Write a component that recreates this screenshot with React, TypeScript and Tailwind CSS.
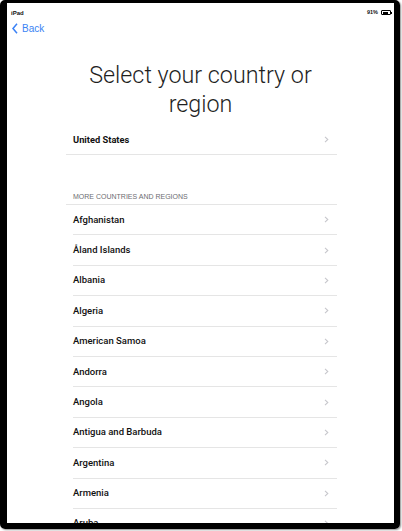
import React from "react";

const countries = [
  "Afghanistan",
  "Åland Islands",
  "Albania",
  "Algeria",
  "American Samoa",
  "Andorra",
  "Angola",
  "Antigua and Barbuda",
  "Argentina",
  "Armenia",
  "Aruba",
  "Australia",
];

function Chevron() {
  return (
    <svg width="5" height="7" viewBox="0 0 5 7" className="shrink-0">
      <path d="M1 0.8 L3.8 3.5 L1 6.2" fill="none" stroke="#c7c7cc" strokeWidth="1.1" />
    </svg>
  );
}

export default function App() {
  return (
    <div className="w-[402px] h-[531px] bg-white overflow-hidden">
      <div className="w-[400px] h-[529px] border-black border-l-[7px] border-t-[3px] border-r-[6px] border-b-[6px] rounded-[5px] shadow-[1px_1px_2px_rgba(0,0,0,0.45)] overflow-hidden">
        <div
          className="h-full bg-white rounded-[3px] overflow-hidden flex flex-col"
          style={{ fontFamily: "'Liberation Sans', Arial, sans-serif" }}
        >
          {/* status bar */}
          <div className="h-[19px] flex items-center justify-between pl-[4px] pr-[2px] shrink-0">
            <span className="text-[6px] font-bold text-[#111] leading-none">iPad</span>
            <div className="flex items-center gap-[3px]">
              <span className="text-[5.5px] font-bold text-[#111] leading-none">91%</span>
              <div className="flex items-center">
                <div className="w-[10px] h-[5px] border border-black rounded-[1px] p-[0.5px]">
                  <div className="w-[85%] h-full bg-black" />
                </div>
                <div className="w-[1px] h-[2px] bg-black" />
              </div>
            </div>
          </div>
          {/* back */}
          <div className="h-[13px] flex items-center pl-[5px] gap-[4px] shrink-0">
            <svg width="6" height="11" viewBox="0 0 6 11">
              <path d="M5 0.8 L1 5.5 L5 10.2" fill="none" stroke="#3b82f6" strokeWidth="1.5" />
            </svg>
            <span className="text-[10px] text-[#3a84f4] leading-none">Back</span>
          </div>
          {/* title */}
          <div
            className="mt-[26px] text-center text-[23.3px] leading-[29px] font-light text-[#1f1f1f] shrink-0"
            style={{ fontFamily: "Roboto, 'Liberation Sans', sans-serif" }}
          >
            Select your country or
            <br />
            region
          </div>
          {/* list */}
          <div
            className="w-[271px] ml-[59px] mt-[6px] shrink-0"
            style={{ fontFamily: "Roboto, 'Liberation Sans', sans-serif" }}
          >
            <div className="h-[30px] flex items-center justify-between pl-[7px] pr-[8px] border-b border-[#e5e5e5]">
              <span className="text-[9.3px] font-bold text-[#111]">United States</span>
              <Chevron />
            </div>
            <div className="pt-[37px] pb-[3px] pl-[7px] border-b border-[#e5e5e5]">
              <div
                className="text-[7px] leading-[9px] text-[#6d6d72]"
                style={{ fontFamily: "'Liberation Sans', Arial, sans-serif" }}
              >
                MORE COUNTRIES AND REGIONS
              </div>
            </div>
            {countries.map((c) => (
              <div key={c} className="pl-[7px]">
                <div className="h-[30.4px] flex items-center justify-between pr-[8px] border-b border-[#e5e5e5]">
                  <span className="text-[9.5px] font-medium text-[#111]">{c}</span>
                  <Chevron />
                </div>
              </div>
            ))}
          </div>
        </div>
      </div>
    </div>
  );
}
